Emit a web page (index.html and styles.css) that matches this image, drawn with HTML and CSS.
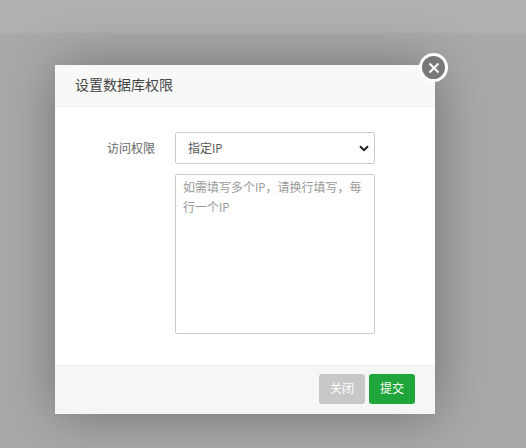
FILE: index.html
```html
<!DOCTYPE html>
<html lang="zh">
<head>
<meta charset="utf-8">
<title>设置数据库权限</title>
<link rel="stylesheet" href="styles.css">
</head>
<body>
<div class="topbar"></div>
<div class="dialog">
  <div class="dialog-title">设置数据库权限</div>
  <button class="close" type="button" aria-label="关闭">
    <svg viewBox="0 0 14 14" width="14" height="14"><path d="M2.5 2.5L11.500 11.500M11.500 2.500L2.500 11.500" stroke="#fff" stroke-width="2" fill="none"/></svg>
  </button>
  <div class="dialog-body">
    <div class="row">
      <label class="label">访问权限</label>
      <div class="select"><span>指定IP</span>
        <svg class="chev" viewBox="0 0 10 7" width="10" height="7"><path d="M1 1.200L5 5.200L9 1.200" stroke="#222" stroke-width="2" fill="none"/></svg>
      </div>
    </div>
    <div class="area">如需填写多个IP，请换行填写，每行一个IP</div>
  </div>
  <div class="dialog-foot">
    <button class="btn btn-gray" type="button">关闭</button>
    <button class="btn btn-green" type="button">提交</button>
  </div>
</div>
</body>
</html>
```
FILE: styles.css
```css
html, body { margin: 0; height: 100%; }
body {
  width: 526px; height: 448px; overflow: hidden; position: relative;
  background: #a9a9a9;
  font-family: "Open Sans", "Noto Sans CJK SC", sans-serif;
  font-size: 12px; color: #666;
}
.topbar { height: 33px; background: #b0b0b0; }
.dialog {
  position: absolute; left: 55px; top: 65px; width: 380px; height: 349px;
  display: flex; flex-direction: column; background: #fff;
  box-shadow: 1px 1px 50px rgba(0,0,0,.33);
}
.dialog-title {
  height: 41px; line-height: 39px; padding-left: 20px; flex: none;
  background: #f8f8f8; border-bottom: 1px solid #eee;
  font-size: 14px; color: #444;
}
.close {
  position: absolute; left: 364px; top: -12px; width: 29px; height: 29px;
  padding: 0; box-sizing: border-box; border: 3px solid #fff; border-radius: 50%;
  background: #787878; display: flex; align-items: center; justify-content: center;
}
.dialog-body { flex: 1; padding: 25px 60px 0 0; }
.row { display: flex; align-items: center; }
.label { width: 100px; text-align: right; margin-right: 20px; flex: none; }
.select {
  width: 200px; height: 32px; box-sizing: border-box;
  border: 1px solid #ccc; border-radius: 2px; background: #fff;
  display: flex; align-items: center; justify-content: space-between;
  padding: 0 5px 0 12px; color: #555;
}
.area {
  width: 200px; height: 160px; box-sizing: border-box; margin: 10px 0 0 120px;
  border: 1px solid #ccc; border-radius: 2px; padding: 3px 7px;
  line-height: 20px; color: #999; font-size: 12px;
}
.dialog-foot {
  height: 48px; flex: none; box-sizing: content-box; background: #f5f6f6; border-top: 1px solid #eee;
  display: flex; justify-content: flex-end; align-items: flex-start; gap: 4px; padding-right: 20px;
}
.btn {
  width: 46px; height: 30px; margin-top: 8px; padding: 0 0 2px; border: 0; border-radius: 3px;
  font: inherit; color: #fff;
}
.btn-gray { background: #c8c8c8; }
.btn-green { background: #20a53a; }
```
